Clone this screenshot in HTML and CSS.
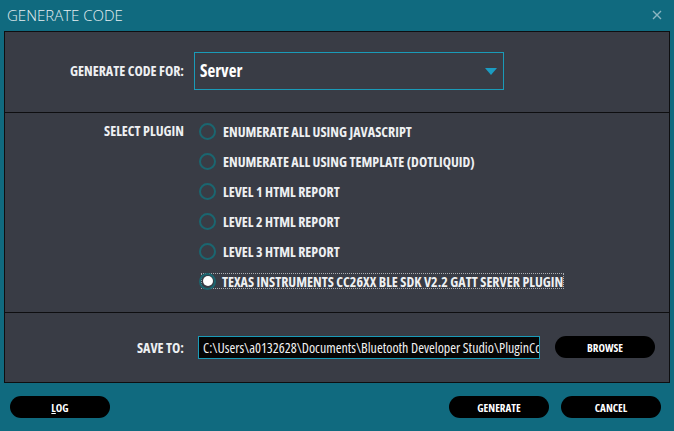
FILE: index.html
```html
<!DOCTYPE html>
<html>
<head>
<meta charset="utf-8">
<link rel="stylesheet" href="styles.css">
</head>
<body>
<div class="window">
  <div class="titlebar">
    <span class="title">GENERATE CODE</span>
    <svg class="close" width="10" height="10" viewBox="0 0 10 10"><path d="M1 1 L9 9 M9 1 L1 9" stroke="#8cb6c2" stroke-width="1.4" fill="none"/></svg>
  </div>
  <div class="panel">
    <div class="section s1">
      <div class="label">GENERATE CODE FOR:</div>
      <div class="select">
        <span class="select-text">Server</span>
        <svg class="caret" width="12" height="7" viewBox="0 0 12 7"><path d="M0 0 H12 L6 7 Z" fill="#1b9cc2"/></svg>
      </div>
    </div>
    <div class="section s2">
      <div class="label plug-label">SELECT PLUGIN</div>
      <div class="options">
        <div class="option"><span class="radio"></span><span class="opt-text">ENUMERATE ALL USING JAVASCRIPT</span></div>
        <div class="option"><span class="radio"></span><span class="opt-text">ENUMERATE ALL USING TEMPLATE (DOTLIQUID)</span></div>
        <div class="option"><span class="radio"></span><span class="opt-text">LEVEL 1 HTML REPORT</span></div>
        <div class="option"><span class="radio"></span><span class="opt-text">LEVEL 2 HTML REPORT</span></div>
        <div class="option"><span class="radio"></span><span class="opt-text">LEVEL 3 HTML REPORT</span></div>
        <div class="option"><span class="focus"><span class="radio checked"></span><span class="opt-text">TEXAS INSTRUMENTS CC26XX BLE SDK V2.2 GATT SERVER PLUGIN</span></span></div>
      </div>
    </div>
    <div class="section s3">
      <div class="label">SAVE TO:</div>
      <div class="input">C:\Users\a0132628\Documents\Bluetooth Developer Studio\PluginCode\TI\Server</div>
      <div class="btn browse">BROWSE</div>
    </div>
  </div>
  <div class="footer">
    <div class="btn"><u>L</u>OG</div>
    <div class="spacer"></div>
    <div class="btn">GENERATE</div>
    <div class="btn">CANCEL</div>
  </div>
</div>
</body>
</html>
```
FILE: styles.css
```css
html, body {
  margin: 0;
  padding: 0;
}
body {
  background: #106a7f;
  width: 674px;
  height: 431px;
  overflow: hidden;
  font-family: "Open Sans", "DejaVu Sans Condensed", sans-serif;
  font-stretch: 75%;
}
.window {
  display: flex;
  flex-direction: column;
  height: 431px;
}
.titlebar {
  height: 31px;
  display: flex;
  align-items: center;
  justify-content: space-between;
  padding: 0 12px 0 7px;
  box-sizing: border-box;
}
.title {
  font-family: "Open Sans", "Noto Sans", sans-serif;
  font-stretch: 100%;
  font-weight: 300;
  font-size: 15px;
  color: #e6eff2;
  padding-bottom: 1px;
}
.close {
  display: block;
  margin-bottom: 2px;
}
.panel {
  margin-left: 4px;
  width: 666px;
  height: 352px;
  box-sizing: border-box;
  border: 1px solid #0e0e10;
  background: #393c45;
  display: flex;
  flex-direction: column;
}
.section {
  display: flex;
  border-bottom: 1px solid #0e0e10;
}
.section:last-child {
  border-bottom: none;
}
.label {
  width: 179px;
  text-align: right;
  font-weight: bold;
  font-size: 14px;
  color: #eef0f2;
  flex: none;
}
.s1 {
  height: 81px;
  box-sizing: border-box;
  align-items: center;
  padding-bottom: 3px;
}
.select {
  margin-left: 10px;
  width: 310px;
  height: 38px;
  box-sizing: border-box;
  border: 1px solid #1a9bb8;
  display: flex;
  align-items: center;
  justify-content: space-between;
  padding: 0 6px 0 5px;
}
.select-text {
  font-weight: bold;
  font-size: 17px;
  font-stretch: 87.5%;
  color: #ffffff;
}
.caret {
  display: block;
  margin-top: 1px;
}
.s2 {
  height: 200px;
  box-sizing: border-box;
  padding-top: 3px;
}
.plug-label {
  line-height: 30px;
  height: 30px;
}
.options {
  margin-left: 15px;
  display: flex;
  flex-direction: column;
}
.option {
  height: 30px;
  display: flex;
  align-items: center;
}
.radio {
  width: 17px;
  height: 17px;
  box-sizing: border-box;
  border: 2px solid #1b6670;
  border-radius: 50%;
  flex: none;
  margin-right: 7px;
  display: flex;
  align-items: center;
  justify-content: center;
}
.radio.checked::after {
  content: "";
  width: 10px;
  height: 10px;
  border-radius: 50%;
  background: #ffffff;
}
.opt-text {
  font-weight: bold;
  font-size: 14px;
  color: #eef0f2;
}
.focus {
  display: flex;
  align-items: center;
  height: 14px;
  border: 1px dotted #a9adb2;
  margin-left: 2px;
}
.focus .radio {
  margin-left: -3px;
  margin-right: 6px;
}
.s3 {
  flex: 1;
  align-items: center;
  padding-bottom: 1px;
}
.input {
  margin-left: 14px;
  width: 342px;
  height: 23px;
  box-sizing: border-box;
  border: 1px solid #1a9bb8;
  background: #050505;
  color: #f2f2f2;
  font-size: 14px;
  line-height: 21px;
  padding-left: 4px;
  white-space: nowrap;
  overflow: hidden;
  flex: none;
}
.btn {
  width: 100px;
  height: 22px;
  border-radius: 11px;
  background: #000000;
  color: #ffffff;
  font-weight: bold;
  font-size: 11px;
  display: flex;
  align-items: center;
  justify-content: center;
  flex: none;
}
.browse {
  margin-left: 15px;
}
.footer {
  display: flex;
  padding: 13px 13px 0 10px;
  gap: 12px;
}
.spacer {
  flex: 1;
}
```
